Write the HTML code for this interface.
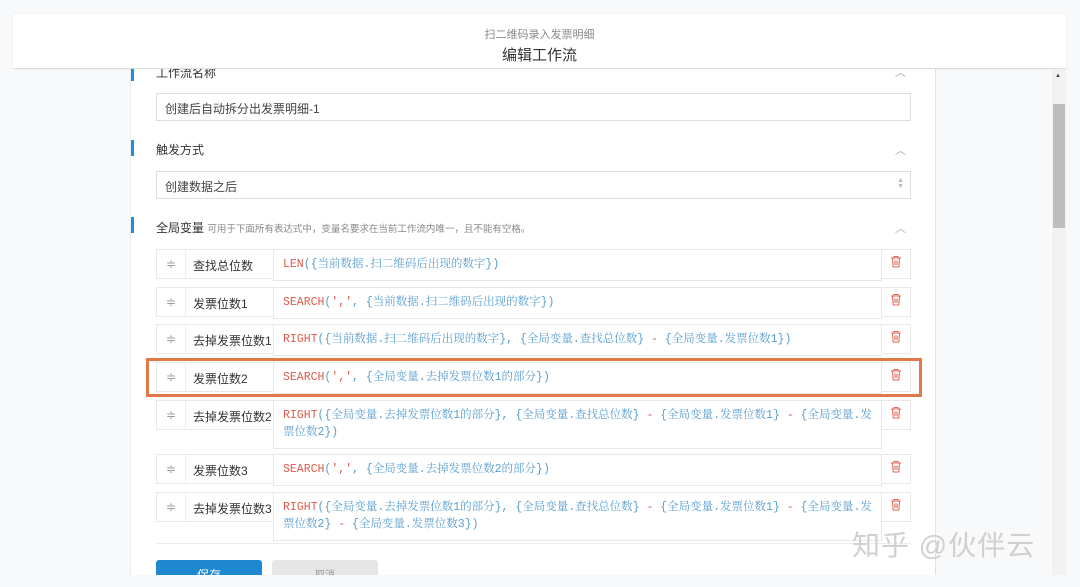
<!DOCTYPE html>
<html><head><meta charset="utf-8"><style>
*{box-sizing:border-box;margin:0;padding:0}
body{width:1080px;height:587px;overflow:hidden;background:#f8f9fa;font-family:"Liberation Sans","Noto Sans CJK SC",sans-serif;position:relative;color:#333}
.hdr{position:absolute;left:13px;top:14px;width:1053px;height:55px;background:#fff;border-bottom:1px solid #ddd;text-align:center;z-index:3;box-shadow:0 0 3px rgba(0,0,0,.06)}
.hdr .s{font-size:11px;color:#888;margin-top:12px}
.hdr .t{font-size:15px;color:#333;margin-top:2px}
.panel{position:absolute;left:130px;top:60px;width:806px;height:520px;background:#fff;border-right:1px solid #e2e2e2;border-left:1px solid #eee}
.sec{position:absolute;left:0;font-size:12px;color:#333}
.bar{position:absolute;left:0;width:3px;height:16px;background:#1f8ed8}
.car{position:absolute;left:764px;color:#aaa;font-size:11px}
.inp{position:absolute;left:25px;width:755px;height:28px;border:1px solid #ddd;font-size:12px;padding:6px 8px;color:#444}
.row{position:absolute;left:25px;width:755px;height:30px;border:1px solid #e8e8e8;font-size:12px}
.row .d{position:absolute;left:0;top:0;width:29px;height:28px;border-right:1px solid #eee;color:#999;text-align:center;line-height:28px;font-size:12px}
.row .n{position:absolute;left:36px;top:7px;white-space:nowrap;overflow:hidden;width:80px;color:#333;font-size:12px}
.row .e{position:absolute;left:116px;top:-1px;width:609px;min-height:30px;border:1px solid #e8e8e8;background:#fff;padding:6px 9px 7px;font-family:"Liberation Mono","Noto Serif CJK SC",monospace;font-size:11.5px;line-height:17px;color:#5a9fcf;z-index:1}
.row .x{position:absolute;right:0;top:0;width:29px;height:28px;border-left:1px solid #eee;text-align:center;line-height:28px}
.r{color:#e05a4a}
.btn{position:absolute;top:500px;height:20px;width:106px;border-radius:3px 3px 0 0}
</style></head><body>
<div class="hdr"><div class="s">扫二维码录入发票明细</div><div class="t">编辑工作流</div></div>
<div class="panel">
 <div class="bar" style="top:5px"></div><div class="sec" style="left:25px;top:4px">工作流名称</div><div class="car" style="top:4px">︿</div>
 <div class="inp" style="top:33px">创建后自动拆分出发票明细-1</div>
 <div class="bar" style="top:80px"></div><div class="sec" style="left:25px;top:81px">触发方式</div><div class="car" style="top:82px">︿</div>
 <div class="inp" style="top:111px">创建数据之后<span style="position:absolute;right:6px;top:6px;font-size:7px;color:#bbb;line-height:6px">▲<br>▼</span></div>
 <div class="bar" style="top:157px"></div><div class="sec" style="left:25px;top:159px">全局变量 <span style="font-size:9.5px;color:#888">可用于下面所有表达式中，变量名要求在当前工作流内唯一，且不能有空格。</span></div><div class="car" style="top:160px">︿</div>

 <div class="row" style="top:189px"><div class="d">≑</div><div class="n">查找总位数</div><div class="e"><span class="r">LEN</span>({当前数据.扫二维码后出现的数字})</div><div class="x"><svg width="12" height="13" viewBox="0 0 12 13"><path d="M1 3h10M4 3V1.5h4V3M2.5 3.5l.7 8.5h5.6l.7-8.5M5 5.5v4.5M7 5.5v4.5" stroke="#e06a5a" fill="none" stroke-width="1.1"/></svg></div></div>
 <div class="row" style="top:227px"><div class="d">≑</div><div class="n">发票位数1</div><div class="e"><span class="r">SEARCH</span>(<span class="r">','</span>, {当前数据.扫二维码后出现的数字})</div><div class="x"><svg width="12" height="13" viewBox="0 0 12 13"><path d="M1 3h10M4 3V1.5h4V3M2.5 3.5l.7 8.5h5.6l.7-8.5M5 5.5v4.5M7 5.5v4.5" stroke="#e06a5a" fill="none" stroke-width="1.1"/></svg></div></div>
 <div class="row" style="top:264px"><div class="d">≑</div><div class="n">去掉发票位数1</div><div class="e"><span class="r">RIGHT</span>({当前数据.扫二维码后出现的数字}, {全局变量.查找总位数} <span class="r">-</span> {全局变量.发票位数1})</div><div class="x"><svg width="12" height="13" viewBox="0 0 12 13"><path d="M1 3h10M4 3V1.5h4V3M2.5 3.5l.7 8.5h5.6l.7-8.5M5 5.5v4.5M7 5.5v4.5" stroke="#e06a5a" fill="none" stroke-width="1.1"/></svg></div></div>
 <div class="row" style="top:302px"><div class="d">≑</div><div class="n">发票位数2</div><div class="e"><span class="r">SEARCH</span>(<span class="r">','</span>, {全局变量.去掉发票位数1的部分})</div><div class="x"><svg width="12" height="13" viewBox="0 0 12 13"><path d="M1 3h10M4 3V1.5h4V3M2.5 3.5l.7 8.5h5.6l.7-8.5M5 5.5v4.5M7 5.5v4.5" stroke="#e06a5a" fill="none" stroke-width="1.1"/></svg></div></div>
 <div class="row" style="top:340px;z-index:2"><div class="d">≑</div><div class="n">去掉发票位数2</div><div class="e"><span class="r">RIGHT</span>({全局变量.去掉发票位数1的部分}, {全局变量.查找总位数} <span class="r">-</span> {全局变量.发票位数1} <span class="r">-</span> {全局变量.发<br>票位数2})</div><div class="x"><svg width="12" height="13" viewBox="0 0 12 13"><path d="M1 3h10M4 3V1.5h4V3M2.5 3.5l.7 8.5h5.6l.7-8.5M5 5.5v4.5M7 5.5v4.5" stroke="#e06a5a" fill="none" stroke-width="1.1"/></svg></div></div>
 <div class="row" style="top:394px"><div class="d">≑</div><div class="n">发票位数3</div><div class="e"><span class="r">SEARCH</span>(<span class="r">','</span>, {全局变量.去掉发票位数2的部分})</div><div class="x"><svg width="12" height="13" viewBox="0 0 12 13"><path d="M1 3h10M4 3V1.5h4V3M2.5 3.5l.7 8.5h5.6l.7-8.5M5 5.5v4.5M7 5.5v4.5" stroke="#e06a5a" fill="none" stroke-width="1.1"/></svg></div></div>
 <div class="row" style="top:432px"><div class="d">≑</div><div class="n">去掉发票位数3</div><div class="e"><span class="r">RIGHT</span>({全局变量.去掉发票位数1的部分}, {全局变量.查找总位数} <span class="r">-</span> {全局变量.发票位数1} <span class="r">-</span> {全局变量.发<br>票位数2} <span class="r">-</span> {全局变量.发票位数3})</div><div class="x"><svg width="12" height="13" viewBox="0 0 12 13"><path d="M1 3h10M4 3V1.5h4V3M2.5 3.5l.7 8.5h5.6l.7-8.5M5 5.5v4.5M7 5.5v4.5" stroke="#e06a5a" fill="none" stroke-width="1.1"/></svg></div></div>
 <div style="position:absolute;left:25px;top:483px;width:755px;border-top:1px solid #eee"></div>
 <div class="btn" style="left:25px;background:#1e88d0;color:#fff;font-size:12px;text-align:center;padding-top:6px">保存</div>
 <div class="btn" style="left:141px;background:#e6e6e6;color:#999;font-size:10px;text-align:center;padding-top:6px">取消</div>
</div>
<div style="position:absolute;left:146px;top:358px;width:776px;height:39px;border:3px solid #e07848;z-index:5"></div>
<div style="position:absolute;left:0;top:575px;width:1080px;height:12px;background:#f8f9fa"></div>
<div style="position:absolute;left:1052px;top:70px;width:14px;height:505px;background:#f2f2f2"></div>
<div style="position:absolute;left:1055px;top:73px;font-size:6px;color:#444">▲</div>
<div style="position:absolute;left:1053px;top:104px;width:12px;height:124px;background:#bdbdbd"></div>
<div style="position:absolute;left:852px;top:524px;font-size:28px;color:#d0d0d0;letter-spacing:1px;z-index:6">知乎 @伙伴云</div>
</body></html>
